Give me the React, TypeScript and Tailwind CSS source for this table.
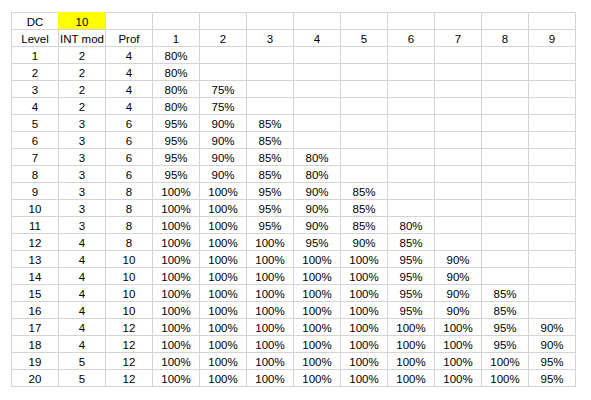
import React from "react";

const data: [number, number, number, string[]][] = [
  [1, 2, 4, ["80%"]],
  [2, 2, 4, ["80%"]],
  [3, 2, 4, ["80%", "75%"]],
  [4, 2, 4, ["80%", "75%"]],
  [5, 3, 6, ["95%", "90%", "85%"]],
  [6, 3, 6, ["95%", "90%", "85%"]],
  [7, 3, 6, ["95%", "90%", "85%", "80%"]],
  [8, 3, 6, ["95%", "90%", "85%", "80%"]],
  [9, 3, 8, ["100%", "100%", "95%", "90%", "85%"]],
  [10, 3, 8, ["100%", "100%", "95%", "90%", "85%"]],
  [11, 3, 8, ["100%", "100%", "95%", "90%", "85%", "80%"]],
  [12, 4, 8, ["100%", "100%", "100%", "95%", "90%", "85%"]],
  [13, 4, 10, ["100%", "100%", "100%", "100%", "100%", "95%", "90%"]],
  [14, 4, 10, ["100%", "100%", "100%", "100%", "100%", "95%", "90%"]],
  [15, 4, 10, ["100%", "100%", "100%", "100%", "100%", "95%", "90%", "85%"]],
  [16, 4, 10, ["100%", "100%", "100%", "100%", "100%", "95%", "90%", "85%"]],
  [17, 4, 12, ["100%", "100%", "100%", "100%", "100%", "100%", "100%", "95%", "90%"]],
  [18, 4, 12, ["100%", "100%", "100%", "100%", "100%", "100%", "100%", "95%", "90%"]],
  [19, 5, 12, ["100%", "100%", "100%", "100%", "100%", "100%", "100%", "100%", "95%"]],
  [20, 5, 12, ["100%", "100%", "100%", "100%", "100%", "100%", "100%", "100%", "95%"]],
];

function Cell({ children, yellow }: { children?: React.ReactNode; yellow?: boolean }) {
  return (
    <div className="relative h-[17px] border-r border-b border-[#d4d4d4] pt-[2px] text-center leading-[14px] text-black whitespace-nowrap">
      {yellow && <div className="absolute -left-px -top-px w-[47px] h-[17px] bg-[#ffff00]" />}
      <span className="relative">{children}</span>
    </div>
  );
}

export default function App() {
  const rows: React.ReactNode[][] = [];
  const r1: React.ReactNode[] = [<Cell key="a">DC</Cell>, <Cell key="b" yellow>10</Cell>];
  for (let i = 0; i < 10; i++) r1.push(<Cell key={"e" + i} />);
  rows.push(r1);
  const r2: React.ReactNode[] = [
    <Cell key="a">Level</Cell>,
    <Cell key="b">INT mod</Cell>,
    <Cell key="c">Prof</Cell>,
  ];
  for (let i = 1; i <= 9; i++) r2.push(<Cell key={"h" + i}>{i}</Cell>);
  rows.push(r2);
  data.forEach(([lvl, mod, prof, vals]) => {
    const r: React.ReactNode[] = [
      <Cell key="a">{lvl}</Cell>,
      <Cell key="b">{mod}</Cell>,
      <Cell key="c">{prof}</Cell>,
    ];
    for (let i = 0; i < 9; i++) r.push(<Cell key={"v" + i}>{vals[i] ?? ""}</Cell>);
    rows.push(r);
  });

  return (
    <div className="w-[591px] h-[400px] bg-white pl-[11px] pt-[12px]" style={{ fontFamily: '"Liberation Sans", Arial, sans-serif' }}>
      <div className="grid grid-cols-[repeat(12,47px)] w-fit border-l border-t border-[#d4d4d4] text-[11.5px]">
        {rows.flat()}
      </div>
    </div>
  );
}
